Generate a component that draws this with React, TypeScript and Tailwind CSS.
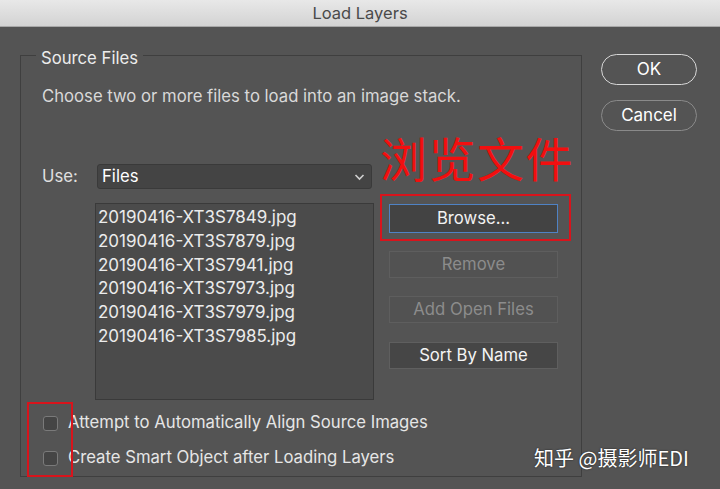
import React from "react";

const files = [
  "20190416-XT3S7849.jpg",
  "20190416-XT3S7879.jpg",
  "20190416-XT3S7941.jpg",
  "20190416-XT3S7973.jpg",
  "20190416-XT3S7979.jpg",
  "20190416-XT3S7985.jpg",
];

const Checkbox = ({ label }: { label: string }) => (
  <div className="flex items-center h-[20px]">
    <div className="w-[15px] h-[15px] rounded-[3px] bg-[#454545] border border-[#7a7a7a]" />
    <span className="ml-[10px] text-[16.7px] text-[#e6e6e6]">{label}</span>
  </div>
);

const App = () => {
  return (
    <div
      className="relative w-[720px] h-[489px] overflow-hidden bg-[#545454] flex flex-col"
      style={{ fontFamily: "Inter, 'Liberation Sans', 'Noto Sans CJK SC', sans-serif" }}
    >
      {/* title bar */}
      <div className="h-[27px] shrink-0 bg-gradient-to-b from-[#e8e8e8] to-[#d3d3d3] border-b border-[#a8a8a8] flex items-center justify-center">
        <span className="text-[16.5px] text-[#4a4a4a]">Load Layers</span>
      </div>

      <div className="flex items-start">
        {/* source files group */}
        <div className="ml-[20px] mt-[28px] w-[562px] h-[422px] border border-[#3f3f3f] flex flex-col">
          <span className="self-start -mt-[8px] ml-[15px] px-[5px] bg-[#545454] text-[16.7px] leading-[20px] text-[#ececec]">
            Source Files
          </span>
          <p className="mt-[18px] ml-[21px] text-[16.7px] leading-[20px] text-[#d9d9d9]">
            Choose two or more files to load into an image stack.
          </p>

          <div className="flex items-start mt-[26px] ml-[21px]">
            {/* left column */}
            <div className="pt-[32px] w-[332px]">
              <div className="flex items-center h-[25px]">
                <span className="w-[55px] text-[16.7px] text-[#e0e0e0]">Use:</span>
                <div className="w-[275px] h-[25px] rounded-[3px] bg-[#444444] border border-[#3a3a3a] flex items-center justify-between pl-[4px] pr-[6px]">
                  <span className="text-[16.7px] text-white">Files</span>
                  <svg width="11" height="8" viewBox="0 0 11 8" fill="none" stroke="#d0d0d0" strokeWidth="1.6">
                    <path d="M1.5 2l4 4 4-4" />
                  </svg>
                </div>
              </div>
              <div className="mt-[14px] ml-[53px] w-[279px] h-[197px] bg-[#4b4b4b] border border-[#3a3a3a] pl-[2px] pt-[2px]">
                {files.map((f) => (
                  <div key={f} className="h-[23.8px] leading-[23.8px] text-[17px] text-[#ececec]">
                    {f}
                  </div>
                ))}
              </div>
            </div>

            {/* right column */}
            <div className="ml-[6px] flex flex-col items-start">
              <div
                className="h-[50px] leading-[50px] text-[47px] tracking-[1.5px] text-[#f20f0f]"
                style={{ fontFamily: "'Noto Sans CJK SC', sans-serif", fontWeight: 400 }}
              >
                浏览文件
              </div>
              <div className="mt-[12px] border-2 border-[#d8141c] pl-[7px] pt-[8px] pr-[11px] pb-[6px]">
                <button className="w-[169px] h-[29px] bg-[#434343] border-[1.5px] border-[#4f82c4] text-[16.7px] text-[#f2f2f2]">
                  Browse...
                </button>
              </div>
              <button className="mt-[10px] ml-[9px] w-[169px] h-[27px] border border-[#5e5e5e] bg-[#525252] text-[16.7px] text-[#8c8c8c]">
                Remove
              </button>
              <button className="mt-[18px] ml-[9px] w-[169px] h-[27px] border border-[#5e5e5e] bg-[#525252] text-[16.7px] text-[#8c8c8c]">
                Add Open Files
              </button>
              <button className="mt-[19px] ml-[9px] w-[169px] h-[27px] border border-[#5f5f5f] bg-[#464646] text-[16.7px] text-[#f4f4f4]">
                Sort By Name
              </button>
            </div>
          </div>

          {/* checkboxes */}
          <div className="relative mt-[13px] ml-[22px] flex flex-col gap-[15px]">
            <Checkbox label="Attempt to Automatically Align Source Images" />
            <Checkbox label="Create Smart Object after Loading Layers" />
            <div className="absolute -left-[16px] -top-[11px] w-[46px] h-[75px] border-2 border-[#d8141c]" />
          </div>
        </div>

        {/* dialog buttons */}
        <div className="ml-[19px] mt-[27px] flex flex-col gap-[15px]">
          <button className="w-[96px] h-[31px] rounded-full border-[1.5px] border-[#d6d6d6] text-[17px] text-white">
            OK
          </button>
          <button className="w-[96px] h-[31px] rounded-full border border-[#8a8a8a] text-[17px] text-white">
            Cancel
          </button>
        </div>
      </div>

      {/* watermark */}
      <div
        className="absolute left-[534px] top-[443px] text-[20px] text-white [text-shadow:0_0_2px_rgba(0,0,0,0.7)]"
        style={{ fontFamily: "'Noto Sans CJK SC', sans-serif" }}
      >
        知乎 @摄影师EDI
      </div>
    </div>
  );
};

export default App;
